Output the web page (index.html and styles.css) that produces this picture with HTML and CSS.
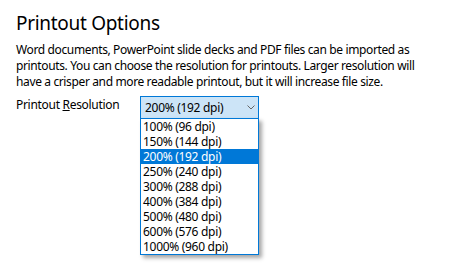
FILE: index.html
```html
<!DOCTYPE html>
<html lang="en">
<head>
  <meta charset="UTF-8">
  <meta name="viewport" content="width=device-width, initial-scale=1.0">
  <link rel="stylesheet" href="styles.css">
  <title>Printout Options</title>
</head>
<body>

  <main class="options">
    <h1 class="title">Printout Options</h1>
    <p class="intro">Word documents, PowerPoint slide decks and PDF files can be imported as printouts. You can choose the resolution for printouts. Larger resolution will have a crisper and more readable printout, but it will increase file size.</p>

    <div class="field">
      <label class="field-label" for="resolution">Printout <u>R</u>esolution</label>
      <div class="combo">
        <div class="combo-box" id="resolution">
          <span class="combo-value">200% (192 dpi)</span>
          <svg class="combo-arrow" width="8" height="5" viewBox="0 0 8 5">
            <path d="M0.5 0.5 L4 4 L7.5 0.5" fill="none" stroke="#666" stroke-width="1"/>
          </svg>
        </div>
        <ul class="combo-list">
          <li>100% (96 dpi)</li>
          <li>150% (144 dpi)</li>
          <li class="selected">200% (192 dpi)</li>
          <li>250% (240 dpi)</li>
          <li>300% (288 dpi)</li>
          <li>400% (384 dpi)</li>
          <li>500% (480 dpi)</li>
          <li>600% (576 dpi)</li>
          <li>1000% (960 dpi)</li>
        </ul>
      </div>
    </div>
  </main>

</body>
</html>
```

FILE: styles.css
```css
html, body {
  min-height: 100vh;
}

body {
  margin: 0;
  background-color: #fff;
  color: #000;
  font-family: "Noto Sans", "Open Sans", sans-serif;
}

.options {
  padding: 10px 16px 0 16px;
}

.title {
  margin: 0;
  font-size: 19px;
  font-weight: normal;
  letter-spacing: -0.3px;
  line-height: 26px;
}

.intro {
  margin: 6px 0 0 0;
  max-width: 420px;
  font-size: 12px;
  letter-spacing: -0.37px;
  line-height: 16px;
}

.field {
  display: flex;
  margin-top: 6px;
  font-size: 12px;
  letter-spacing: -0.3px;
}

.field-label {
  width: 124px;
  padding-top: 1px;
  line-height: 16px;
}

.combo {
  position: relative;
  width: 119px;
}

.combo-box {
  display: flex;
  align-items: center;
  justify-content: space-between;
  height: 21px;
  padding: 0 3px 0 4px;
  border: 1px solid #0078d7;
  background-color: #cce4f7;
  line-height: 20px;
}

.combo-arrow {
  display: block;
}

.combo-list {
  position: absolute;
  top: 22px;
  left: 0;
  width: 117px;
  margin: 0;
  padding: 0;
  list-style: none;
  border: 1px solid #0078d7;
  background-color: #fff;
  box-shadow: 3px 3px 4px rgba(0, 0, 0, 0.35);
}

.combo-list li {
  height: 15px;
  padding-left: 2px;
  line-height: 15px;
}

.combo-list .selected {
  background-color: #0078d7;
  color: #fff;
}
```
